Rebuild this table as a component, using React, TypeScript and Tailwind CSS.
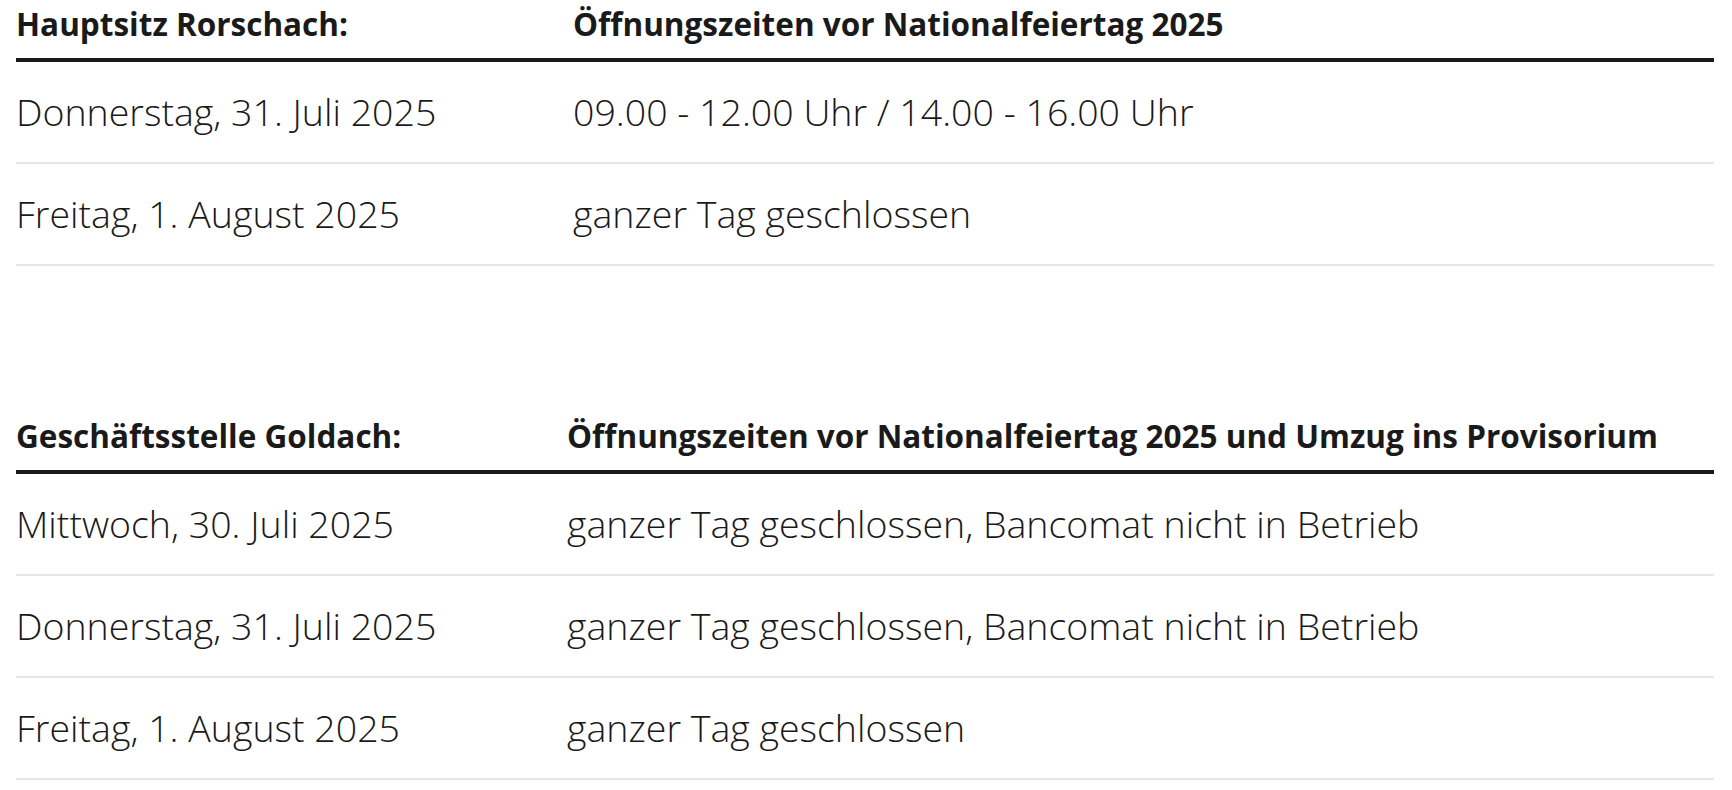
import React from "react";

interface Row {
    day: string;
    hours: string;
}

interface Branch {
    name: string;
    title: string;
    firstCol: string;
    rows: Row[];
}

const branches: Branch[] = [
    {
        name: "Hauptsitz Rorschach:",
        title: "Öffnungszeiten vor Nationalfeiertag 2025",
        firstCol: "w-[557px]",
        rows: [
            { day: "Donnerstag, 31. Juli 2025", hours: "09.00 - 12.00 Uhr / 14.00 - 16.00 Uhr" },
            { day: "Freitag, 1. August 2025", hours: "ganzer Tag geschlossen" },
        ],
    },
    {
        name: "Geschäftsstelle Goldach:",
        title: "Öffnungszeiten vor Nationalfeiertag 2025 und Umzug ins Provisorium",
        firstCol: "w-[551px]",
        rows: [
            { day: "Mittwoch, 30. Juli 2025", hours: "ganzer Tag geschlossen, Bancomat nicht in Betrieb" },
            { day: "Donnerstag, 31. Juli 2025", hours: "ganzer Tag geschlossen, Bancomat nicht in Betrieb" },
            { day: "Freitag, 1. August 2025", hours: "ganzer Tag geschlossen" },
        ],
    },
];

function HoursTable({ branch }: { branch: Branch }) {
    return (
        <div className="flex flex-col">
            {/* header row */}
            <div className="flex h-[62px] border-b-4 border-[#1a1a1a] pt-1 text-[31.5px] leading-[40px] font-bold">
                <div className={`${branch.firstCol} shrink-0`}>{branch.name}</div>
                <div>{branch.title}</div>
            </div>
            {branch.rows.map((row, i) => (
                <div key={i} className="flex h-[102px] items-center border-b-2 border-[#e6e6e6] text-[37.5px] leading-[44px] font-[350]">
                    <div className={`${branch.firstCol} shrink-0`}>{row.day}</div>
                    <div>{row.hours}</div>
                </div>
            ))}
        </div>
    );
}

export default function App() {
    return (
        <div className="min-h-screen bg-white text-[#1a1a1a] font-['Open_Sans',sans-serif]">
            <div className="ml-4 w-[1698px] flex flex-col gap-[146px]">
                {branches.map((b) => (
                    <HoursTable key={b.name} branch={b} />
                ))}
            </div>
        </div>
    );
}
